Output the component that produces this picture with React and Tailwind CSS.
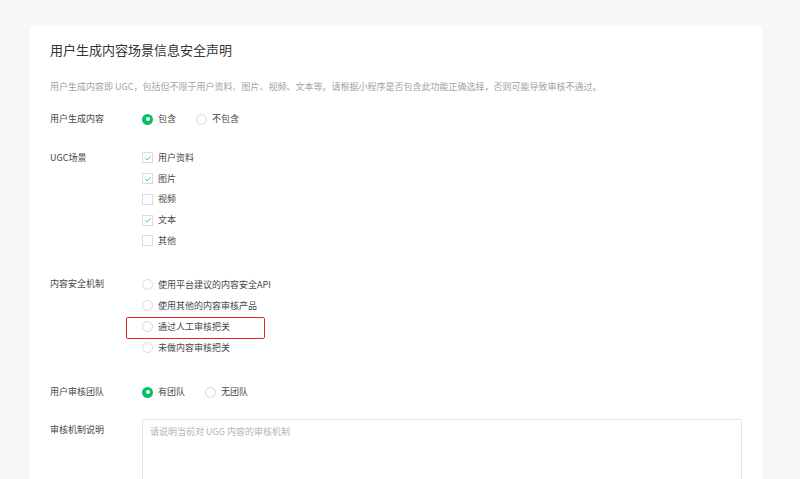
import { useState } from "react";

const ugcScenes = [
  { key: "profile", label: "用户资料", checked: true },
  { key: "image", label: "图片", checked: true },
  { key: "video", label: "视频", checked: false },
  { key: "text", label: "文本", checked: true },
  { key: "other", label: "其他", checked: false },
];

const mechanisms = [
  { key: "api", label: "使用平台建议的内容安全API" },
  { key: "other", label: "使用其他的内容审核产品" },
  { key: "manual", label: "通过人工审核把关", marked: true },
  { key: "none", label: "未做内容审核把关" },
];

function Radio({ checked, label, onClick }) {
  return (
    <button type="button" onClick={onClick} className="flex items-center mr-5 h-5 text-left">
      {checked ? (
        <span className="w-[11px] h-[11px] rounded-full bg-[#07c160] flex items-center justify-center">
          <span className="w-[4px] h-[4px] rounded-full bg-white" />
        </span>
      ) : (
        <span className="w-[11px] h-[11px] rounded-full border border-[#d9d9d9] bg-white" />
      )}
      <span className="ml-[5px] text-[9px] text-[#484848] leading-5">{label}</span>
    </button>
  );
}

function Checkbox({ checked, label, onClick }) {
  return (
    <button type="button" onClick={onClick} className="flex items-center h-[20.75px] text-left">
      <span className="w-[11px] h-[11px] border border-[#dcdcdc] bg-white flex items-center justify-center">
        {checked ? (
          <svg viewBox="0 0 12 12" className="w-[8px] h-[8px]">
            <path d="M2 6.2 L4.8 8.8 L10 3.4" fill="none" stroke="#07c160" strokeWidth="1.2" />
          </svg>
        ) : null}
      </span>
      <span className="ml-[5px] text-[9px] text-[#484848] leading-5">{label}</span>
    </button>
  );
}

function Row({ label, className = "", labelClass = "", children }) {
  return (
    <div className={"flex " + className}>
      <div className={"w-[92px] shrink-0 text-[9px] text-[#484848] leading-5 " + labelClass}>{label}</div>
      <div className="flex-1">{children}</div>
    </div>
  );
}

export default function App() {
  const [hasUgc, setHasUgc] = useState(true);
  const [scenes, setScenes] = useState(ugcScenes);
  const [mech, setMech] = useState("");
  const [team, setTeam] = useState(true);

  function toggleScene(key) {
    setScenes(scenes.map((s) => (s.key === key ? { ...s, checked: !s.checked } : s)));
  }

  return (
    <div
      className="bg-[#f6f7f9] pt-[26px] pl-[30px] pr-[38px] overflow-hidden h-[479px]"
      style={{ fontFamily: '"Noto Sans CJK SC", "Noto Sans", sans-serif' }}
    >
      <div className="bg-white rounded-t-[4px] pt-[14px] px-5 pb-10 w-[732px]">
        <h1 className="text-[13px] leading-5 text-[#353535] font-normal">用户生成内容场景信息安全声明</h1>
        <p className="mt-[19px] text-[9px] leading-4 text-[#a3a3a3]">
          用户生成内容即 UGC，包括但不限于用户资料、图片、视频、文本等。请根据小程序是否包含此功能正确选择，否则可能导致审核不通过。
        </p>

        <Row label="用户生成内容" className="mt-[14px]">
          <div className="flex">
            <Radio checked={hasUgc} label="包含" onClick={() => setHasUgc(true)} />
            <Radio checked={!hasUgc} label="不包含" onClick={() => setHasUgc(false)} />
          </div>
        </Row>

        <Row label="UGC场景" className="mt-[18.5px] items-start">
          <div>
            {scenes.map((s) => (
              <Checkbox key={s.key} checked={s.checked} label={s.label} onClick={() => toggleScene(s.key)} />
            ))}
          </div>
        </Row>

        <Row label="内容安全机制" className="mt-[23px]">
          <div>
            {mechanisms.map((m) => (
              <div key={m.key} className="relative h-[21px] flex items-center">
                <Radio checked={mech === m.key} label={m.label} onClick={() => setMech(m.key)} />
                {m.marked ? (
                  <div className="absolute left-[-16px] top-[0.5px] w-[139px] h-[22px] border-[1.5px] border-[#e3262c] rounded-[2px] pointer-events-none" />
                ) : null}
              </div>
            ))}
          </div>
        </Row>

        <Row label="用户审核团队" className="mt-[24px]">
          <div className="flex">
            <Radio checked={team} label="有团队" onClick={() => setTeam(true)} />
            <Radio checked={!team} label="无团队" onClick={() => setTeam(false)} />
          </div>
        </Row>

        <Row label="审核机制说明" className="mt-[17px]" labelClass="pt-[1px]">
          <textarea
            className="block w-[600px] h-[100px] border border-[#e6e6e6] rounded-[1px] px-[7px] py-[2px] text-[9px] leading-5 text-[#353535] placeholder:text-[#b4b4b4] resize-none outline-none"
            placeholder="请说明当前对 UGG 内容的审核机制"
          />
        </Row>
      </div>
    </div>
  );
}
